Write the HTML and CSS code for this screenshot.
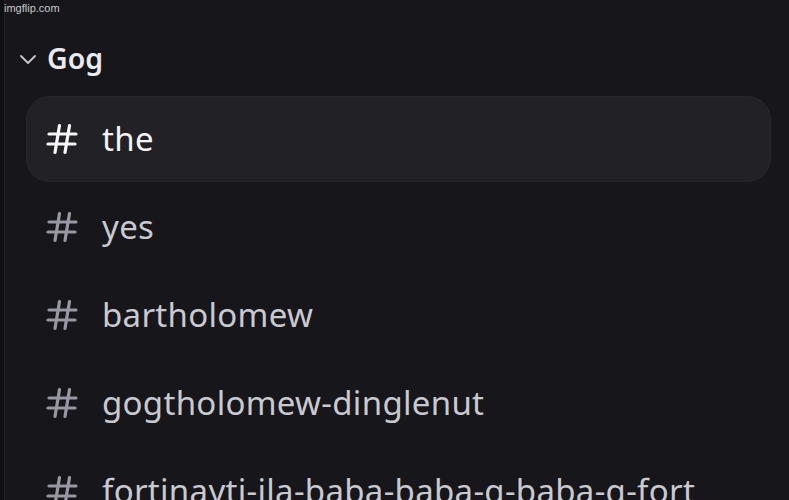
FILE: index.html
```html
<!DOCTYPE html>
<html>
<head>
<meta charset="utf-8">
<link rel="stylesheet" href="styles.css">
</head>
<body>
<div class="sidebar">
  <div class="watermark">imgflip.com</div>
  <div class="category">
    <svg class="chev" viewBox="0 0 18 18" width="18" height="18"><path d="M2 6l7 7 7-7" fill="none" stroke="currentColor" stroke-width="1.8" stroke-linecap="round" stroke-linejoin="round"/></svg>
    <span class="cat-name">Gog</span>
  </div>
  <ul class="channels">
    <li class="channel active">
      <svg class="hash" viewBox="0 0 32 32" width="32" height="32"><g stroke="currentColor" stroke-width="3.2" stroke-linecap="round" fill="none"><path d="M13.5 2.5l-4.5 27M23.5 2.5l-4.5 27M3 11h27M2 21h27"/></g></svg>
      <span class="name">the</span>
    </li>
    <li class="channel">
      <svg class="hash" viewBox="0 0 32 32" width="32" height="32"><g stroke="currentColor" stroke-width="3.2" stroke-linecap="round" fill="none"><path d="M13.5 2.5l-4.5 27M23.5 2.5l-4.5 27M3 11h27M2 21h27"/></g></svg>
      <span class="name">yes</span>
    </li>
    <li class="channel">
      <svg class="hash" viewBox="0 0 32 32" width="32" height="32"><g stroke="currentColor" stroke-width="3.2" stroke-linecap="round" fill="none"><path d="M13.5 2.5l-4.5 27M23.5 2.5l-4.5 27M3 11h27M2 21h27"/></g></svg>
      <span class="name">bartholomew</span>
    </li>
    <li class="channel">
      <svg class="hash" viewBox="0 0 32 32" width="32" height="32"><g stroke="currentColor" stroke-width="3.2" stroke-linecap="round" fill="none"><path d="M13.5 2.5l-4.5 27M23.5 2.5l-4.5 27M3 11h27M2 21h27"/></g></svg>
      <span class="name">gogtholomew-dinglenut</span>
    </li>
    <li class="channel">
      <svg class="hash" viewBox="0 0 32 32" width="32" height="32"><g stroke="currentColor" stroke-width="3.2" stroke-linecap="round" fill="none"><path d="M13.5 2.5l-4.5 27M23.5 2.5l-4.5 27M3 11h27M2 21h27"/></g></svg>
      <span class="name">fortinayti-ila-baba-baba-g-baba-g-fort</span>
    </li>
  </ul>
</div>
</body>
</html>
```
FILE: styles.css
```css
html, body {
  margin: 0;
  padding: 0;
  background: #16161b;
  height: 100%;
  overflow: hidden;
}
body {
  font-family: "Noto Sans", "Open Sans", sans-serif;
}
.sidebar {
  position: relative;
  height: 500px;
  border-left: 4px solid #101014;
  box-shadow: inset 1px 0 0 #202026;
  padding: 0 18px 0 22px;
  box-sizing: border-box;
}
.watermark {
  position: absolute;
  left: 0;
  top: 2px;
  font-family: "Liberation Sans", Arial, sans-serif;
  font-size: 11px;
  color: #c9c9cc;
}
.category {
  display: flex;
  align-items: center;
  gap: 10px;
  height: 74px;
  padding-top: 42px;
  box-sizing: border-box;
  margin-left: -7px;
  color: #e6e6ea;
}
.chev {
  color: #c8c8ce;
  width: 18px;
  height: 18px;
  margin-top: 2px;
}
.cat-name {
  font-size: 28.5px;
  font-weight: 600;
  color: #eaeaee;
  line-height: 1;
}
.channels {
  list-style: none;
  margin: 22px 0 0;
  padding: 0;
  display: flex;
  flex-direction: column;
  gap: 2px;
}
.channel {
  display: flex;
  align-items: center;
  height: 86px;
  padding-left: 20px;
  gap: 24px;
  border-radius: 24px;
  color: #9898a2;
  box-sizing: border-box;
}
.channel.active {
  background: #212126;
  box-shadow: inset 0 0 0 1px #26262c;
  color: #f5f5f7;
}
.hash {
  flex: none;
  width: 32px;
  height: 32px;
}
.name {
  font-size: 33px;
  letter-spacing: 0.3px;
  color: #c9c9d0;
  white-space: nowrap;
  line-height: 1;
  padding-bottom: 2px;
}
.channel.active .name {
  color: #f4f4f6;
}
```
